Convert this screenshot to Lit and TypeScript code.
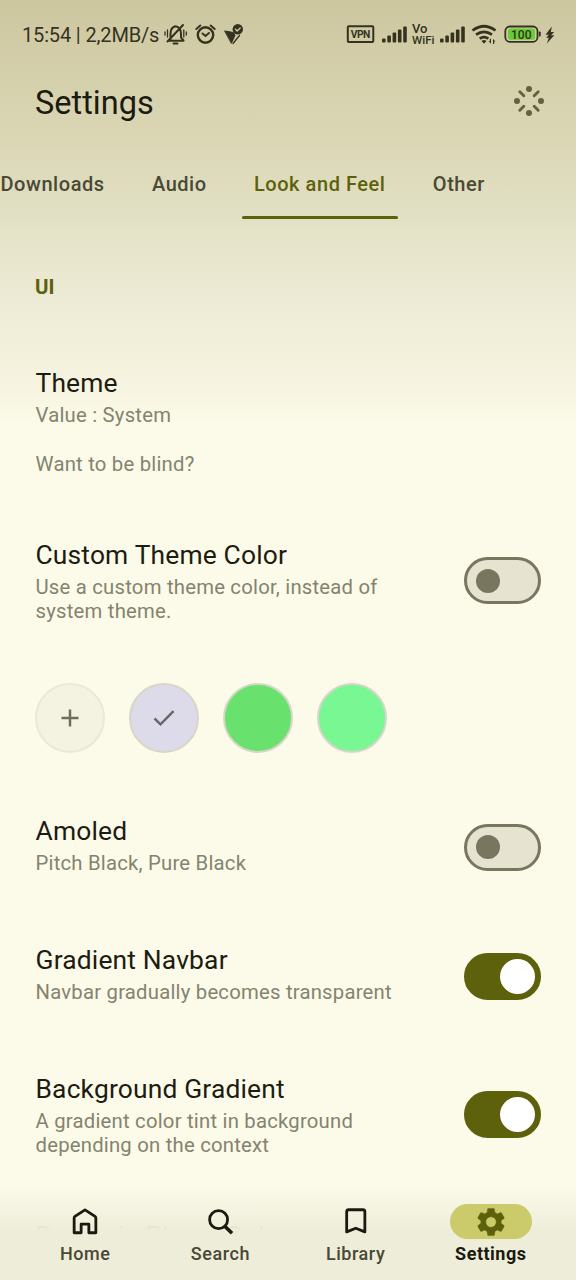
import { LitElement, html, svg, css } from "lit";
import { customElement, property } from "lit/decorators.js";
import { classMap } from "lit/directives/class-map.js";

@customElement("status-bar")
class StatusBar extends LitElement {
  static styles = css`
    :host { display: flex; flex: none; justify-content: space-between; align-items: center; height: 70px; padding: 0 20px 0 22px; color: #35331f; box-sizing: border-box; }
    .side { display: flex; align-items: center; }
    .clock { width: 138px; font-size: 20px; line-height: 24px; letter-spacing: -0.15px; white-space: nowrap; }
    svg { display: block; }
  `;
  bars(x: number) {
    return [4, 7, 10, 13, 16].map((h, i) => svg`<rect x=${x + i * 5.3} y=${42.5 - h} width="3.6" height=${h} rx="1"/>`);
  }
  render() {
    return html`
      <div class="side">
        <span class="clock">15:54 | 2,2MB/s</span>
        <svg width="90" height="30" viewBox="160 20.500 90 30" fill="none" stroke="currentColor" stroke-width="2" stroke-linecap="round">
          <path d="M168 41.300h15.500M170.500 40v-6q0-6 5-7.300q5.500 1 5.500 7.300v4l2.500 3M183 25.500 167.500 42"/>
          <path d="M173.500 44h4" />
          <path d="M165 32.500v3M167.500 30.500v7M183.800 30.500v7M186.300 32.500v3" stroke-width="1.300"/>
          <circle cx="205.500" cy="35.500" r="7.700" stroke-width="2.400"/>
          <path d="M202.500 34l3 2.500 3.500-3M196.300 29.500l4-3.500M214.700 29.500l-4-3.500" stroke-width="2"/>
          <path d="M225 31.500l8.500 1.500 1.500 3-3.500 7.500Z" fill="currentColor" stroke-width="1"/>
          <path d="M239.500 36l-6.500 8" stroke-width="1.300"/>
          <circle cx="237.800" cy="29.800" r="5.200" fill="currentColor" stroke="none"/>
          <path d="M235.500 29.800l1.700 1.700 3-3" stroke="#cdc8a0" stroke-width="1.300"/>
        </svg>
      </div>
      <div class="side">
        <svg width="210" height="30" viewBox="346 20 210 30" fill="currentColor" font-family="Roboto, sans-serif">
          <rect x="347.800" y="26.200" width="25.500" height="15.800" rx="1" fill="none" stroke="currentColor" stroke-width="2"/>
          <text x="350.800" y="37.900" font-size="10.300" font-weight="700" textLength="19.500">VPN</text>
          ${this.bars(382)}
          <text x="412" y="33" font-size="12" font-weight="500" textLength="15.500" lengthAdjust="spacingAndGlyphs">Vo</text>
          <text x="412" y="43.800" font-size="11.500" font-weight="500" textLength="22.500" lengthAdjust="spacingAndGlyphs">WiFi</text>
          ${this.bars(440)}
          <g fill="none" stroke="currentColor" stroke-width="2.700">
            <path d="M472.500 30.500q11.500-8.500 23 0M476 34.700q8-5.700 16 0M479.700 38.600q4.300-3 8.600 0"/>
          </g>
          <path d="M481.500 41q2.500-1.800 5 0l-2.500 2.700ZM491 38.800v5l-2.500-2.500h1.300v-2.500ZM493 44v-5l2.500 2.500h-1.300v2.500Z"/>
          <rect x="505.300" y="26.500" width="32.200" height="15.300" rx="4.500" fill="none" stroke="currentColor" stroke-width="1.800"/>
          <rect x="508" y="28.500" width="27" height="11.300" rx="2.500" fill="#67cc35"/>
          <text x="511" y="38.500" font-size="12" font-weight="500" textLength="20.500">100</text>
          <rect x="538.800" y="31.500" width="1.900" height="5" rx="0.800"/>
          <path d="M551.800 26.500l-6.300 8.300h3.300l-2.600 3h2.600l-2 5.700 7.500-8.300h-3.200l3-3.200h-3.300Z"/>
        </svg>
      </div>`;
  }
}

@customElement("toggle-switch")
class ToggleSwitch extends LitElement {
  @property({ type: Boolean }) on = false;
  static styles = css`
    :host { display: block; flex: none; }
    .track { display: flex; align-items: center; box-sizing: border-box; width: 77px; height: 47px; border: 3px solid #79765f; border-radius: 24px; background: #e6e3d1; padding: 0 9px; }
    .thumb { width: 24px; height: 24px; border-radius: 50%; background: #79765f; }
    .on { background: #5e610b; border-color: #5e610b; justify-content: flex-end; padding: 0 3px; }
    .on .thumb { width: 35px; height: 35px; background: #fff; }
  `;
  render() {
    return html`<div class=${classMap({ track: true, on: this.on })}><div class="thumb"></div></div>`;
  }
}

@customElement("setting-row")
class SettingRow extends LitElement {
  @property() heading = "";
  @property({ attribute: false }) lines: string[] = [];
  @property() toggle = "";
  static styles = css`
    :host { display: flex; justify-content: space-between; align-items: center; padding: 0 35px 0 35.500px; flex: none; }
    .text { min-height: 66px; padding-top: 0.500px; box-sizing: border-box; }
    h3 { margin: 0; font-size: 26.400px; line-height: 32px; font-weight: 400; letter-spacing: 0.170px; color: #1c1c12; white-space: nowrap; }
    p { margin: 4px 0 0; font-size: 20.300px; line-height: 24.500px; letter-spacing: 0.220px; color: #84836f; white-space: nowrap; }
    .line { display: block; min-height: 24.500px; }
  `;
  render() {
    return html`
      <div class="text">
        <h3>${this.heading}</h3>
        <p>${this.lines.map((l) => html`<span class="line">${l}</span>`)}</p>
      </div>
      ${this.toggle ? html`<toggle-switch ?on=${this.toggle === "on"}></toggle-switch>` : ""}`;
  }
}

const navIcons = {
  Home: svg`<path d="M2.700 8.500Q2.700 7.700 3.400 7.200L12 1.600 20.600 7.200Q21.300 7.700 21.300 8.500V21.200H15.300V13.800H8.700V21.200H2.700Z" fill="none" stroke="currentColor" stroke-width="2.400" stroke-linejoin="round"/>`,
  Search: svg`<g fill="none" stroke="currentColor" stroke-width="2.400"><circle cx="10.800" cy="10" r="7.700"/><path d="m16.300 15.800 6 5.800" stroke-width="3.100"/></g>`,
  Library: svg`<path d="M4 3.200Q4 1.500 5.700 1.500H17.900Q19.600 1.500 19.600 3.200V20.500L11.800 17.300 4 20.500Z" fill="none" stroke="currentColor" stroke-width="2.400" stroke-linejoin="round"/>`,
  Settings: svg`<path fill="currentColor" fill-rule="evenodd" d="M19.140 12.940c.04-.3.060-.61.060-.94s-.02-.64-.07-.94l2.030-1.580a.49.490 0 0 0 .12-.61l-1.920-3.320a.49.490 0 0 0-.59-.22l-2.390.96c-.5-.38-1.030-.7-1.620-.94l-.36-2.540A.48.480 0 0 0 13.920 2.400h-3.840a.48.480 0 0 0-.47.410l-.36 2.540c-.59.240-1.130.57-1.620.94l-2.390-.96a.48.480 0 0 0-.59.220L2.740 8.870a.48.480 0 0 0 .12.610l2.030 1.580c-.05.3-.09.630-.09.940s.02.640.070.940l-2.030 1.580a.49.490 0 0 0-.12.610l1.920 3.320c.12.220.37.290.59.220l2.390-.96c.5.380 1.030.7 1.620.94l.36 2.540c.05.240.24.410.48.410h3.840c.24 0 .44-.17.470-.41l.36-2.540c.59-.24 1.130-.56 1.620-.94l2.390.96c.22.080.47 0 .59-.22l1.920-3.320a.48.480 0 0 0-.12-.61Z M12 8.300a3.700 3.700 0 1 0 0 7.400a3.700 3.700 0 1 0 0-7.400Z" stroke="currentColor" stroke-width="0.300"/>`,
};

@customElement("nav-bar")
class NavBar extends LitElement {
  static styles = css`
    :host { display: flex; justify-content: center; height: 96px; padding-top: 20px; box-sizing: border-box; background: linear-gradient(#fcfbe900 0, #eeedda 48px, #eeedda 100%); }
    .item { display: flex; flex-direction: column; align-items: center; width: 135.200px; color: #1a1a10; }
    .pill { display: flex; align-items: center; justify-content: center; width: 82px; height: 35px; border-radius: 18px; }
    .label { margin-top: 4px; font-size: 18px; line-height: 22px; font-weight: 500; letter-spacing: 0.55px; color: #494834; }
    .active .pill { background: #cbcb6b; color: #5e610b; }
    .active .label { font-weight: 700; color: #1a1a10; letter-spacing: 0.500px; }
    svg { display: block; width: 28px; height: 28px; overflow: visible; }
    .active svg { width: 34px; height: 34px; }
  `;
  render() {
    return Object.entries(navIcons).map(([name, icon]) => html`
      <div class=${classMap({ item: true, active: name === "Settings" })}>
        <div class="pill"><svg viewBox="0 0 24 24">${icon}</svg></div>
        <div class="label">${name}</div>
      </div>`);
  }
}

@customElement("app-root")
class AppRoot extends LitElement {
  static styles = css`
    :host { display: flex; flex-direction: column; position: relative; height: 1280px; overflow: hidden; box-sizing: border-box; font-family: Roboto, sans-serif; background: linear-gradient(#ccc79f 0, #dad6b4 130px, #e2e0c4 215px, #edebd5 300px, #f7f5e1 390px, #fcfbe9 425px); }
    header { display: flex; flex: none; align-items: center; justify-content: space-between; height: 66px; padding: 0 31px 0 35px; }
    header svg { margin-bottom: 4px; }
    h1 { margin: 0; font-size: 32.500px; line-height: 40px; font-weight: 400; letter-spacing: 0; color: #1b1b10; }
    .tabs { display: flex; flex: none; height: 83px; padding-top: 15px; box-sizing: border-box; }
    .tab { display: flex; flex-direction: column; justify-content: space-between; height: 68px; flex: none; padding: 21px 12px 0; margin-right: 23.300px; box-sizing: border-box; font-size: 20px; line-height: 24px; font-weight: 500; letter-spacing: 0.550px; color: #4a4935; }
    .tab:first-child { padding-left: 0.500px; }
    .tab.active { color: #5e610b; }
    .line { height: 3px; margin: 0 -12px; border-radius: 2px; background: #5e610b; }
    .section { flex: none; margin: 56px 0 0 35px; font-size: 20.500px; line-height: 24px; font-weight: 700; color: #5e610b; }
    .theme { margin-top: 67.500px; }
    .custom { margin-top: 61.500px; }
    .swatches { display: flex; flex: none; gap: 24px; margin: 59px 0 0 35px; }
    .swatch { display: flex; align-items: center; justify-content: center; width: 70px; height: 70px; box-sizing: border-box; border: 2px solid #d8d6c8; border-radius: 50%; }
    .add { background: #f4f3e2; border-color: #eae8d8; }
    .lilac { background: #dddaea; }
    .green { background: #69e26d; }
    .mint { background: #78f792; }
    .amoled { margin-top: 61.500px; }
    .next { margin-top: 63px; }
    .peek { margin-top: 61.500px; opacity: 0.4; -webkit-mask-image: linear-gradient(#000 10px, transparent 15px); mask-image: linear-gradient(#000 10px, transparent 15px); }
    nav-bar { position: absolute; left: 0; right: 0; bottom: 0; }
  `;
  render() {
    return html`
      <status-bar></status-bar>
      <header>
        <h1>Settings</h1>
        <svg width="32" height="32" viewBox="-16 -16 32 32" fill="#65613f" stroke="#65613f">
          ${[0, 90, 180, 270].map((a) => svg`<g transform="rotate(${a})"><circle cx="0" cy="-12" r="3" stroke="none"/><path d="M5.200-5.200 9.200-9.200" stroke-width="2.900" stroke-linecap="round"/></g>`)}
        </svg>
      </header>
      <div class="tabs">
        <div class="tab">Downloads</div>
        <div class="tab">Audio</div>
        <div class="tab active"><span>Look and Feel</span><div class="line"></div></div>
        <div class="tab">Other</div>
      </div>
      <div class="section">UI</div>
      <setting-row class="theme" heading="Theme" .lines=${["Value : System", "", "Want to be blind?"]}></setting-row>
      <setting-row class="custom" heading="Custom Theme Color" .lines=${["Use a custom theme color, instead of", "system theme."]} toggle="off"></setting-row>
      <div class="swatches">
        <div class="swatch add"><svg width="20" height="20" viewBox="0 0 20 20" stroke="#706e5b" stroke-width="2.500"><path d="M10 1.500v17M1.500 10h17"/></svg></div>
        <div class="swatch lilac"><svg width="24" height="24" viewBox="0 0 24 24" fill="none" stroke="#696767" stroke-width="2.500"><path d="m2.500 12.500 6 5.800L21.500 5.200"/></svg></div>
        <div class="swatch green"></div>
        <div class="swatch mint"></div>
      </div>
      <setting-row class="amoled" heading="Amoled" .lines=${["Pitch Black, Pure Black"]} toggle="off"></setting-row>
      <setting-row class="next" heading="Gradient Navbar" .lines=${["Navbar gradually becomes transparent"]} toggle="on"></setting-row>
      <setting-row class="next" heading="Background Gradient" .lines=${["A gradient color tint in background", "depending on the context"]} toggle="on"></setting-row>
      <setting-row class="peek" heading="Dynamic Player Color"></setting-row>
      <nav-bar></nav-bar>`;
  }
}
